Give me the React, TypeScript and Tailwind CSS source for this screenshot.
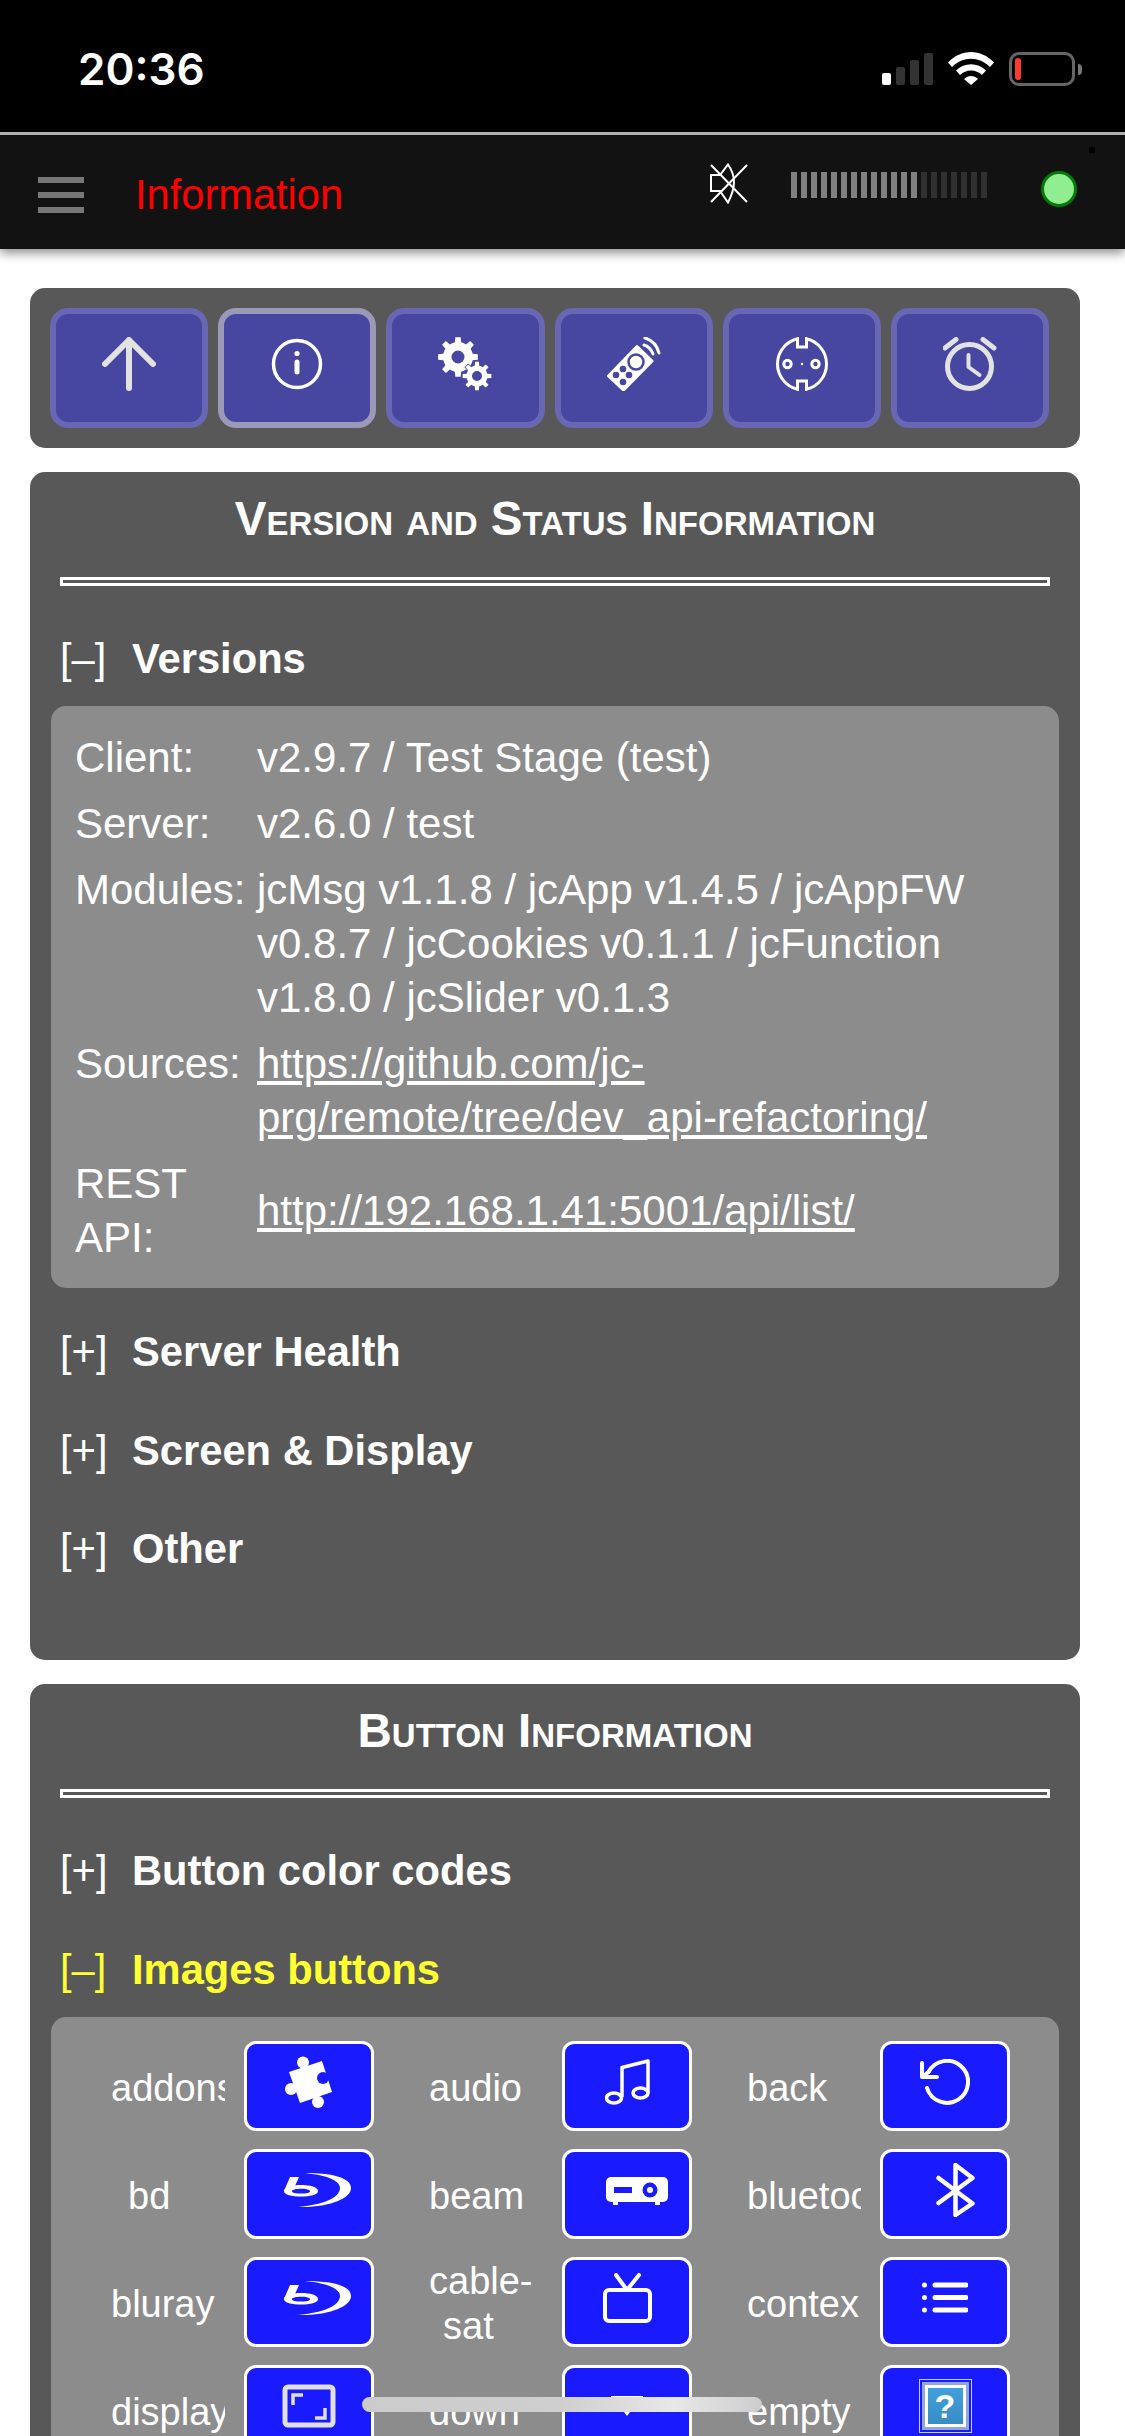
import type { ReactNode } from 'react'

function gearPath(cx: number, cy: number, outer: number, root: number, hole: number, teeth: number) {
  const pts: string[] = []
  const step = (Math.PI * 2) / teeth
  for (let i = 0; i < teeth; i++) {
    const a = i * step
    const offs: [number, number][] = [
      [-0.5, root],
      [-0.27, root],
      [-0.17, outer],
      [0.17, outer],
      [0.27, root],
    ]
    offs.forEach(([o, r]) => {
      const t = a + o * step
      pts.push(`${(cx + Math.cos(t) * r).toFixed(2)} ${(cy + Math.sin(t) * r).toFixed(2)}`)
    })
  }
  return `M${pts.join('L')}Z M${cx - hole} ${cy}a${hole} ${hole} 0 1 0 ${hole * 2} 0a${hole} ${hole} 0 1 0 ${-hole * 2} 0Z`
}

function ToolButton({ active, children }: { active?: boolean; children: ReactNode }) {
  return (
    <div
      className={`w-[158.2px] h-[120px] shrink-0 rounded-[18px] border-[6px] bg-[#4747a1] flex items-center justify-center pb-[8px] ${
        active ? 'border-[#9b99b8]' : 'border-[#6867b3]'
      }`}
    >
      {children}
    </div>
  )
}

function Toolbar() {
  return (
    <div className="h-[160px] rounded-[15px] bg-[#585858] px-[20px] pt-[20px] flex gap-[10px]">
      <ToolButton>
        <svg width="54" height="54" viewBox="0 0 54 54" fill="none" stroke="#e2e2e2" strokeWidth="6" strokeLinecap="round" strokeLinejoin="round">
          <path d="M3 27 27 3l24 24M27 3v48" />
        </svg>
      </ToolButton>
      <ToolButton active>
        <svg width="54" height="54" viewBox="0 0 54 54" fill="none" stroke="#fff">
          <circle cx="27" cy="27" r="23.5" strokeWidth="3.5" />
          <circle cx="27" cy="16.5" r="2.6" fill="#fff" stroke="none" />
          <path d="M27 25v10" strokeWidth="5" strokeLinecap="round" />
        </svg>
      </ToolButton>
      <ToolButton>
        <svg width="54" height="54" viewBox="0 0 54 54">
          <path d={gearPath(20, 20, 20, 15, 6.5, 8)} fill="#fff" fillRule="evenodd" />
          <path d={gearPath(39, 39, 14.5, 10.5, 5, 8)} fill="#fff" fillRule="evenodd" stroke="#4747a1" strokeWidth="1.5" paintOrder="stroke" />
        </svg>
      </ToolButton>
      <ToolButton>
        <svg width="54" height="54" viewBox="0 0 54 54" fill="none">
          <path d="M1.500 39 30 9.500 45 24 16.500 53Z" fill="#fff" stroke="#fff" strokeWidth="3" strokeLinejoin="round" />
          <circle cx="29" cy="25" r="7.500" fill="#fff" stroke="#4747a1" strokeWidth="2.500" />
          <circle cx="16" cy="32" r="3.300" fill="#4747a1" />
          <circle cx="9" cy="38" r="3.300" fill="#4747a1" />
          <circle cx="22" cy="38" r="3.300" fill="#4747a1" />
          <circle cx="16" cy="45" r="3.300" fill="#4747a1" />
          <path d="M38 1c7 2 12 7 14 15M37 8c4 1 7 4 9 9" stroke="#fff" strokeWidth="3" strokeLinecap="round" />
        </svg>
      </ToolButton>
      <ToolButton>
        <svg width="54" height="54" viewBox="0 0 54 54" fill="none" stroke="#fff" strokeWidth="3">
          <path d="M22.500 1.700V10h9V1.700A26 26 0 0 1 31.500 52.300V44h-9v8.300A26 26 0 0 1 22.500 1.700Z" />
          <circle cx="12.500" cy="27" r="3.700" />
          <circle cx="40.500" cy="27" r="3.700" />
          <circle cx="27" cy="27" r="1.200" fill="#fff" stroke="none" />
        </svg>
      </ToolButton>
      <ToolButton>
        <svg width="54" height="54" viewBox="0 0 54 54" fill="none" stroke="#e2e2e2" strokeLinecap="round" strokeLinejoin="round">
          <circle cx="26.500" cy="29.500" r="22" strokeWidth="5" />
          <path d="M25.500 18v12l11 8" strokeWidth="4" />
          <path d="M2 11 13 2.500M40 2.500 51 11" strokeWidth="5" />
        </svg>
      </ToolButton>
    </div>
  )
}

function SectionRow({ open, yellow, title, className }: { open?: boolean; yellow?: boolean; title: string; className: string }) {
  return (
    <div className={`h-[54px] flex items-center text-[41.7px] ${yellow ? 'text-[#ffff33]' : 'text-white'} ${className}`}>
      <span className="w-[72px] shrink-0 font-normal whitespace-nowrap">{open ? '[–]' : '[+]'}</span>
      <span className="font-bold whitespace-nowrap">{title}</span>
    </div>
  )
}

function CardTitle({ children }: { children: string }) {
  return (
    <>
      <div className="h-[54px] pt-[20px] box-content flex items-center justify-center text-[47.5px] font-bold text-white [font-variant:small-caps] whitespace-nowrap">
        {children}
      </div>
      <div className="h-[9px] mt-[31px] mx-[30px] border-[3px] border-white" />
    </>
  )
}

function InfoRow({ label, children, className }: { label: ReactNode; children: ReactNode; className?: string }) {
  return (
    <div className={`flex ${className ?? ''}`}>
      <div className="w-[182px] shrink-0">{label}</div>
      <div className="whitespace-nowrap">{children}</div>
    </div>
  )
}

function VersionsPanel() {
  return (
    <div className="mx-[21px] mt-[20px] rounded-[15px] bg-[#8c8c8c] px-[24px] pt-[25px] pb-[23px] text-[42px] leading-[54px] text-white flex flex-col gap-[12px]">
      <InfoRow label="Client:">v2.9.7 / Test Stage (test)</InfoRow>
      <InfoRow label="Server:">v2.6.0 / test</InfoRow>
      <InfoRow label="Modules:">
        jcMsg v1.1.8 / jcApp v1.4.5 / jcAppFW
        <br />
        v0.8.7 / jcCookies v0.1.1 / jcFunction
        <br />
        v1.8.0 / jcSlider v0.1.3
      </InfoRow>
      <InfoRow label="Sources:">
        <span className="underline">
          https://github.com/jc-
          <br />
          prg/remote/tree/dev_api-refactoring/
        </span>
      </InfoRow>
      <InfoRow label={<>REST<br />API:</>} className="items-center">
        <span className="underline">http://192.168.1.41:5001/api/list/</span>
      </InfoRow>
    </div>
  )
}

const PuzzleIcon = (
  <svg width="48" height="52" viewBox="0 0 48 52">
    <path d="M4 16 37 5l10 31-32 11Z" fill="#fff" />
    <circle cx="18" cy="6.500" r="6" fill="#fff" />
    <path d="M15 8h7l1 6-7 2Z" fill="#fff" />
    <circle cx="6" cy="33" r="6" fill="#fff" />
    <circle cx="33" cy="46" r="6" fill="#fff" />
    <circle cx="38" cy="22" r="6" fill="#1a1aff" />
  </svg>
)

const MusicIcon = (
  <svg width="45" height="46" viewBox="0 0 45 46" fill="none" stroke="#fff" strokeWidth="3.500">
    <ellipse cx="9" cy="39" rx="7.500" ry="5" />
    <ellipse cx="35.500" cy="34" rx="7.500" ry="5" />
    <path d="M17 38V8.500L43 2v32" strokeLinejoin="round" />
  </svg>
)

const BackIcon = (
  <svg width="50" height="46" viewBox="0 0 50 46" fill="none" stroke="#fff" strokeWidth="4" strokeLinecap="round" strokeLinejoin="round">
    <path d="M8.500 13A21 21 0 1 1 7 29" />
    <path d="M2 4v14h15M2 18l6.500-5" />
  </svg>
)

const BluRayIcon = (
  <svg width="67" height="34" viewBox="0 0 67 34" fill="#fff" className="ml-[16px]">
    <path d="M21 0C46 0 67 4 67 15 67 27 40 35 14 34 38 32 56 25 56 15 56 7 41 2 21 0Z" />
    <path d="M6 4h9l-4 9L0 18Z" />
    <path fillRule="evenodd" d="M0 18c0-4 8-6 17-6s17 2 17 6-8 5.500-17 5.500S0 22 0 18Zm8 .200c0 1.500 4 2.300 9 2.300s9-.8 9-2.300-4-2.400-9-2.400-9 .9-9 2.400Z" />
  </svg>
)

const ProjectorIcon = (
  <svg width="62" height="28" viewBox="0 0 62 28" className="ml-[20px] mt-[2px]">
    <rect width="62" height="25" rx="5" fill="#fff" />
    <path d="M7 24h5v4H7zM49 24h5v4h-5z" fill="#fff" />
    <rect x="8" y="10" width="18" height="6" fill="#1a1aff" />
    <circle cx="44" cy="13" r="7.500" fill="#1a1aff" />
    <circle cx="44" cy="13" r="3" fill="#fff" />
  </svg>
)

const BluetoothIcon = (
  <svg width="39" height="54" viewBox="0 0 39 54" fill="none" stroke="#fff" strokeWidth="4.500" strokeLinecap="round" strokeLinejoin="round" className="ml-[20px]">
    <path d="M2.500 15 36.500 40.500 19.500 52V2L36.500 15 2.500 40" />
  </svg>
)

const TvIcon = (
  <svg width="49" height="50" viewBox="0 0 49 50" fill="none" stroke="#fff" strokeWidth="4" strokeLinecap="round" strokeLinejoin="round">
    <rect x="2" y="17" width="45" height="31" rx="4" />
    <path d="M13 2l11 15L36 2" />
  </svg>
)

const ListIcon = (
  <svg width="46" height="31" viewBox="0 0 46 31" fill="#fff" stroke="#fff" strokeLinecap="round">
    <path d="M13 3h31M13 15.500h31M13 28h31" strokeWidth="5" />
    <circle cx="2.500" cy="3" r="2.500" stroke="none" />
    <circle cx="2.500" cy="15.500" r="2.500" stroke="none" />
    <circle cx="2.500" cy="28" r="2.500" stroke="none" />
  </svg>
)

const DisplayIcon = (
  <svg width="54" height="44" viewBox="0 0 54 44" fill="none" stroke="#e0e0e0">
    <rect x="3" y="3" width="48" height="38" rx="3" strokeWidth="5" />
    <path d="M11 21V11h10M43 24v10H33" strokeWidth="3.500" />
  </svg>
)

const DownIcon = (
  <svg width="32" height="20" viewBox="0 0 32 20" fill="#fff">
    <path d="M0 0h32v12H22l-6 8-6-8H0Z" />
  </svg>
)

const EmptyIcon = (
  <div className="w-[53px] h-[54px] border border-[#c8d0f0] p-[2px]">
    <div className="w-full h-full bg-[#8fa8d8] p-[3px]">
      <div className="w-full h-full border-[3px] border-white bg-gradient-to-b from-[#3fa0dc] to-[#3a8cc4] flex items-center justify-center text-[34px] leading-none font-bold text-white">
        ?
      </div>
    </div>
  </div>
)

const imageButtons: { label: ReactNode; icon: ReactNode; pad?: string }[] = [
  { label: 'addons', icon: PuzzleIcon },
  { label: 'audio', icon: MusicIcon },
  { label: 'back', icon: BackIcon },
  { label: 'bd', icon: BluRayIcon, pad: 'pl-[17px]' },
  { label: 'beam', icon: ProjectorIcon },
  { label: 'bluetooth', icon: BluetoothIcon },
  { label: 'bluray', icon: BluRayIcon },
  { label: <>cable-<br /><span className="pl-[14px]">sat</span></>, icon: TvIcon },
  { label: 'context', icon: ListIcon, pad: '[clip-path:inset(0_2px_0_0)]' },
  { label: 'display', icon: DisplayIcon },
  { label: 'down', icon: DownIcon },
  { label: 'empty', icon: EmptyIcon },
]

function ImageButtons() {
  return (
    <div className="mx-[21px] mt-[20px] rounded-t-[15px] bg-[#8c8c8c] pl-[60px] pt-[24px] pb-[30px] grid grid-cols-[318px_318px_318px] gap-y-[18px] text-[38px] leading-[45px] text-white">
      {imageButtons.map((b, i) => (
        <div key={i} className="h-[90px] flex items-center">
          <div className={`w-[114px] mr-[19px] shrink-0 overflow-hidden whitespace-nowrap mt-[4px] ${b.pad ?? ''}`}>{b.label}</div>
          <div className="w-[130px] h-[90px] shrink-0 rounded-[12px] border-[3px] border-white bg-[#1a1aff] flex items-center justify-center pb-[9px]">
            {b.icon}
          </div>
        </div>
      ))}
    </div>
  )
}

function StatusBar() {
  const bars = ['h-[12px] bg-white', 'h-[18px] bg-[#333]', 'h-[25px] bg-[#333]', 'h-[32px] bg-[#333]']
  return (
    <div className="h-[132px] bg-black flex text-white">
      <div className="ml-[78px] mt-[43px] text-[44px] leading-[52px] font-semibold font-['Inter',sans-serif]">20:36</div>
      <div className="ml-auto mr-[43px] mt-[52px] h-[34px] flex items-start">
        <div className="flex items-end gap-[5px] h-[33px]">
          {bars.map(b => (
            <div key={b} className={`w-[9px] rounded-[2px] ${b}`} />
          ))}
        </div>
        <svg width="46" height="33" viewBox="0 0 46 33" className="ml-[15px]">
          <path d="M0 10.500C13-3.500 33-3.500 46 10.500l-4 4.500C31 4 15 4 4 15Z" fill="#fff" />
          <path d="M8 18.500c8.500-8.500 21.500-8.500 30 0l-4 4.500c-6-6-16-6-22 0Z" fill="#fff" />
          <path d="M16 27c4-4 10-4 14 0l-7 6Z" fill="#fff" />
        </svg>
        <div className="ml-[15px] w-[66px] h-[34px] rounded-[10px] border-[3px] border-[#666] pl-[3px] py-[3px] flex">
          <div className="w-[6px] rounded-[3px] bg-[#ff3b30]" />
        </div>
        <div className="ml-[3px] mt-[12px] w-[4px] h-[11px] rounded-r-[4px] bg-[#777]" />
      </div>
    </div>
  )
}

function Header() {
  const levels = Array.from({ length: 20 }, (_, i) => i < 13)
  return (
    <div className="relative z-10 h-[117px] border-t-[3px] border-[#b0b0b0] bg-[#121212] shadow-[0_4px_10px_rgba(0,0,0,0.45)] flex items-center">
      <div className="ml-[38px] mt-[6px] w-[46px] flex flex-col gap-[9px]">
        <div className="h-[6px] bg-[#777]" />
        <div className="h-[6px] bg-[#777]" />
        <div className="h-[6px] bg-[#777]" />
      </div>
      <div className="ml-[51px] text-[41.6px] text-[#ff0000] mt-[6px]">Information</div>
      <div className="ml-auto mr-[48px] flex items-center mb-[6px]">
        <svg width="38" height="41" viewBox="0 0 38 41" fill="none" stroke="#fff" strokeWidth="2" className="mb-[12px]">
          <path d="M1 12h9L18 1.500Q24 10 24 19T18 39.500L10 28H1Z" />
          <path d="M1 2l36 37M37 2 1 39" />
        </svg>
        <div className="ml-[43px] flex gap-[4px] mb-[8px]">
          {levels.map((on, i) => (
            <div key={i} className={`w-[6px] h-[26px] ${on ? 'bg-[#808080]' : 'bg-[#303030]'}`} />
          ))}
        </div>
        <div className="ml-[54px] w-[36px] h-[36px] rounded-full border-[3px] border-[#067a06] bg-[#90ee90]" />
      </div>
      <div className="absolute right-[30px] top-[12px] w-[6px] h-[6px] bg-black" />
    </div>
  )
}

export default function App() {
  return (
    <div className="relative w-[1125px] h-[2436px] overflow-hidden bg-white font-['Liberation_Sans',Arial,sans-serif]">
      <StatusBar />
      <Header />
      <div className="pl-[30px] pr-[45px] pt-[39px]">
        <Toolbar />
        <div className="mt-[24px] h-[1188px] rounded-[15px] bg-[#585858]">
          <CardTitle>Version and Status Information</CardTitle>
          <SectionRow open title="Versions" className="mt-[46px] mx-[30px]" />
          <VersionsPanel />
          <SectionRow title="Server Health" className="mt-[37px] mx-[30px]" />
          <SectionRow title="Screen & Display" className="mt-[45px] mx-[30px]" />
          <SectionRow title="Other" className="mt-[44px] mx-[30px]" />
        </div>
        <div className="mt-[24px] rounded-t-[15px] bg-[#585858] pb-[40px]">
          <CardTitle>Button Information</CardTitle>
          <SectionRow title="Button color codes" className="mt-[46px] mx-[30px]" />
          <SectionRow open yellow title="Images buttons" className="mt-[45px] mx-[30px]" />
          <ImageButtons />
        </div>
      </div>
      <div className="absolute left-[362px] top-[2397px] w-[400px] h-[15px] rounded-[8px] bg-[linear-gradient(90deg,#cbcbcb_0%,#cfcfcf_50%,#e8e8e8_78%,#cdcdcd_100%)]" />
    </div>
  )
}
